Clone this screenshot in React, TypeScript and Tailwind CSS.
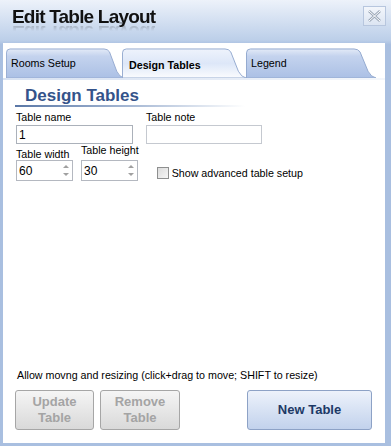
import React from "react"

const font = { fontFamily: '"Liberation Sans", Arial, sans-serif' }

const TabShape = ({ selected }: { selected?: boolean }) => (
  <svg className="absolute inset-0 h-full w-full" viewBox="0 0 130 31" preserveAspectRatio="none">
    <defs>
      <linearGradient id="tabOff" x1="0" y1="0" x2="0" y2="1">
        <stop offset="0" stopColor="#e3eaf7" />
        <stop offset="0.25" stopColor="#c4d3ee" />
        <stop offset="1" stopColor="#abc0e5" />
      </linearGradient>
      <linearGradient id="tabOn" x1="0" y1="0" x2="0" y2="1">
        <stop offset="0" stopColor="#eef3fc" />
        <stop offset="0.5" stopColor="#dde7f8" />
        <stop offset="1" stopColor="#fbfcfe" />
      </linearGradient>
    </defs>
    <path
      d="M0.5 31 L0.5 5 Q0.5 1 4.5 1 L108 1 Q112 1 114 4 L122 24 Q125 30 130 31 Z"
      fill={selected ? "url(#tabOn)" : "url(#tabOff)"}
      stroke="#93a9cf"
      strokeWidth="1"
    />
  </svg>
)

const Tab = ({ label, selected, w }: { label: string; selected?: boolean; w: string }) => (
  <div className={`relative h-[30px] ${w} shrink-0`}>
    <TabShape selected={selected} />
    <span
      className={`relative block pl-[5px] pt-[10px] text-[10.7px] leading-none text-black ${selected ? "pl-[7px] pt-[12px] font-bold" : ""}`}
    >
      {label}
    </span>
  </div>
)

const Spin = ({ value }: { value: string }) => (
  <div className="relative flex h-[21px] w-[57px] items-center border border-[#b4b8c0] bg-white pl-[2px] text-[12px]">
    {value}
    <div className="absolute right-[3px] top-[4px] flex flex-col gap-[5px]">
      <div className="h-0 w-0 border-x-[3px] border-b-[3px] border-x-transparent border-b-[#a0a0a0]" />
      <div className="h-0 w-0 border-x-[3px] border-t-[3px] border-x-transparent border-t-[#a0a0a0]" />
    </div>
  </div>
)

export default function App() {
  return (
    <div
      style={font}
      className="flex h-[446px] w-[391px] flex-col bg-[#a9bfe0] bg-gradient-to-b from-[#edf2fa] via-[#bccfe9] via-[9%] to-[#a9bfe0] to-[10%]"
    >
      <div className="flex h-[43px] shrink-0 items-start justify-between pl-[12px] pr-[5px]">
        <div className="pt-[7px]">
          <div className="text-[19px] font-bold leading-[20px] tracking-[-0.8px] text-[#111] [-webkit-box-reflect:below_-5px_linear-gradient(transparent_55%,rgba(255,255,255,0.35))]">
            Edit Table Layout
          </div>
        </div>
        <div className="mt-[6px] flex h-[20px] w-[23px] items-center justify-center border border-[#b7c6de] bg-gradient-to-b from-[#f3f6fb] to-[#dce5f2]">
          <svg width="13" height="12" viewBox="0 0 13 12">
            <path d="M1 1 L12 11 M12 1 L1 11" stroke="#9aa6b6" strokeWidth="2.6" />
            <path d="M1 1 L12 11 M12 1 L1 11" stroke="#ffffff" strokeWidth="1" />
          </svg>
        </div>
      </div>

      <div className="mb-[3px] ml-[3px] mr-[6px] flex flex-1 flex-col bg-white">
        <div className="flex pl-[3px] pt-[5px]">
          <Tab label="Rooms Setup" w="w-[118px]" />
          <div className="-ml-[2px]">
            <Tab label="Design Tables" selected w="w-[124px]" />
          </div>
          <Tab label="Legend" w="w-[130px]" />
        </div>
        <div className="h-[2px] bg-gradient-to-r from-[#d8e2f2] via-[#e4ebf6] to-[#f4f7fb]" />

        <div className="ml-[12px] mt-[6px] w-[230px] bg-gradient-to-r from-[#5a77a6] via-[#a6b8d4] to-white bg-[length:100%_2px] bg-bottom bg-no-repeat pb-[2px] pl-[10px] text-[17px] font-bold leading-[19px] text-[#34538a]">
          Design Tables
        </div>

        <div className="ml-[13px] mt-[4px] flex gap-[13px]">
          <div className="flex flex-col">
            <span className="text-[10.7px] leading-[13px]">Table name</span>
            <div className="mt-[1px] flex h-[19px] w-[117px] items-center border border-[#abb1ba] pl-[2px] text-[12px]">1</div>
          </div>
          <div className="flex flex-col">
            <span className="text-[10.7px] leading-[13px]">Table note</span>
            <div className="mt-[1px] h-[19px] w-[116px] border border-[#c5c9d0]" />
          </div>
        </div>

        <div className="ml-[13px] flex items-end">
          <div className="flex flex-col">
            <span className="text-[10.7px] leading-[12px]">Table width</span>
            <Spin value="60" />
          </div>
          <div className="ml-[8px] flex flex-col">
            <span className="mb-[4px] text-[10.7px] leading-[12px]">Table height</span>
            <Spin value="30" />
          </div>
          <div className="mb-[2px] ml-[18px] flex items-center gap-[3px]">
            <div className="h-[12px] w-[12px] border border-[#8e8f8f] bg-gradient-to-br from-[#dcdcdc] to-[#f6f6f6]" />
            <span className="text-[10.7px] leading-none">Show advanced table setup</span>
          </div>
        </div>

        <div className="flex-1" />

        <div className="ml-[14px] text-[10.7px] leading-[13px]">
          Allow movng and resizing (click+drag to move; SHIFT to resize)
        </div>

        <div className="mb-[13px] ml-[12px] mr-[13px] mt-[8px] flex">
          <button className="flex h-[40px] w-[79px] flex-col items-center justify-center rounded-[3px] border border-[#a6a6a6] bg-gradient-to-b from-[#f5f5f5] to-[#d9d9d9] text-[13px] font-bold leading-[16px] text-[#a4a4a4]">
            <span>Update</span>
            <span>Table</span>
          </button>
          <button className="ml-[6px] flex h-[40px] w-[80px] flex-col items-center justify-center rounded-[3px] border border-[#a6a6a6] bg-gradient-to-b from-[#f5f5f5] to-[#d9d9d9] text-[13px] font-bold leading-[16px] text-[#a4a4a4]">
            <span>Remove</span>
            <span>Table</span>
          </button>
          <div className="flex-1" />
          <button className="flex h-[40px] w-[125px] items-center justify-center rounded-[3px] border border-[#8da2c6] bg-gradient-to-b from-[#edf2fb] to-[#c2d2ec] text-[13px] font-bold text-[#1d3966]">
            New Table
          </button>
        </div>
      </div>
    </div>
  )
}
